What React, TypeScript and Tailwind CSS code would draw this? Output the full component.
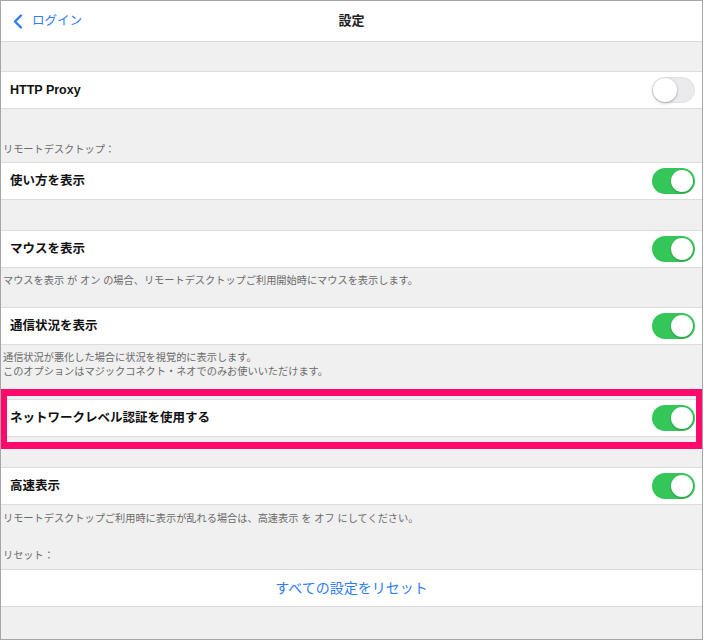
import React from "react"

const FONT = "font-[family-name:'Liberation_Sans','Noto_Sans_CJK_JP',sans-serif]"

function Toggle({ on }: { on: boolean }) {
    if (on) {
        return (
            <div className="w-[43px] h-[26px] rounded-full bg-[#35c659] flex items-center justify-end p-[2px] shrink-0">
                <div className="w-[22px] h-[22px] rounded-full bg-white shadow-[0_1px_2px_rgba(0,0,0,0.25)]" />
            </div>
        )
    }
    return (
        <div className="w-[43px] h-[26px] rounded-full bg-[#ebebed] border border-[#e2e2e2] flex items-center justify-start shrink-0">
            <div className="w-[24px] h-[24px] rounded-full bg-white shadow-[0_1px_3px_rgba(0,0,0,0.3)]" />
        </div>
    )
}

function Row({ label, on }: { label: string; on: boolean }) {
    return (
        <div className="h-[38px] bg-white border-y border-[#dcdcdc] flex items-center justify-between pl-[9px] pr-[7px]">
            <span className="text-[12.5px] font-bold text-[#111]">{label}</span>
            <Toggle on={on} />
        </div>
    )
}

function Note({ children }: { children: React.ReactNode }) {
    return <p className="pl-[2px] text-[10.2px] leading-[14px] text-[#6a6a6a]">{children}</p>
}

export default function App() {
    return (
        <div className={`w-[704px] h-[641px] bg-white ${FONT}`}>
            <div className="w-[703px] h-[640px] border border-[#a6a6a6] bg-[#f0f0f0] overflow-hidden flex flex-col">
                {/* Nav bar */}
                <div className="h-[41px] shrink-0 bg-white border-b border-[#d9d9d9] grid grid-cols-[1fr_auto_1fr] items-center">
                    <div className="flex items-center gap-[9px] pl-[12px] text-[#2f7cf6]">
                        <svg width="10" height="15" viewBox="0 0 10 15" fill="none">
                            <path d="M8 1.5 L2 7.5 L8 13.5" stroke="currentColor" strokeWidth="2.4" strokeLinecap="round" strokeLinejoin="round" />
                        </svg>
                        <span className="text-[12.5px]">ログイン</span>
                    </div>
                    <span className="text-[13px] font-bold text-[#222]">設定</span>
                    <div />
                </div>

                <div className="h-[29px] shrink-0" />
                <Row label="HTTP Proxy" on={false} />

                <div className="pt-[34px] pb-[5px]">
                    <Note>リモートデスクトップ：</Note>
                </div>
                <Row label="使い方を表示" on />

                <div className="h-[30px] shrink-0" />
                <Row label="マウスを表示" on />
                <div className="pt-[6px] pb-[19px]">
                    <Note>マウスを表示 が オン の場合、リモートデスクトップご利用開始時にマウスを表示します。</Note>
                </div>

                <Row label="通信状況を表示" on />
                <div className="pt-[6px] pb-[10px]">
                    <Note>
                        通信状況が悪化した場合に状況を視覚的に表示します。
                        <br />
                        このオプションはマジックコネクト・ネオでのみお使いいただけます。
                    </Note>
                </div>

                {/* Highlighted row */}
                <div className="relative pt-[10px] pb-[12px]">
                    <Row label="ネットワークレベル認証を使用する" on />
                    <div className="absolute inset-y-0 -left-px -right-px border-[7px] border-[#ff0a6c]" />
                </div>

                <div className="h-[18px] shrink-0" />
                <Row label="高速表示" on />
                <div className="pt-[7px] pb-[23px]">
                    <Note>リモートデスクトップご利用時に表示が乱れる場合は、高速表示 を オフ にしてください。</Note>
                </div>
                <div className="pb-[6px]">
                    <Note>リセット：</Note>
                </div>
                <div className="h-[38px] shrink-0 bg-white border-y border-[#dcdcdc] flex items-center justify-center">
                    <span className="text-[14px] text-[#2f7cf6]">すべての設定をリセット</span>
                </div>
            </div>
        </div>
    )
}
